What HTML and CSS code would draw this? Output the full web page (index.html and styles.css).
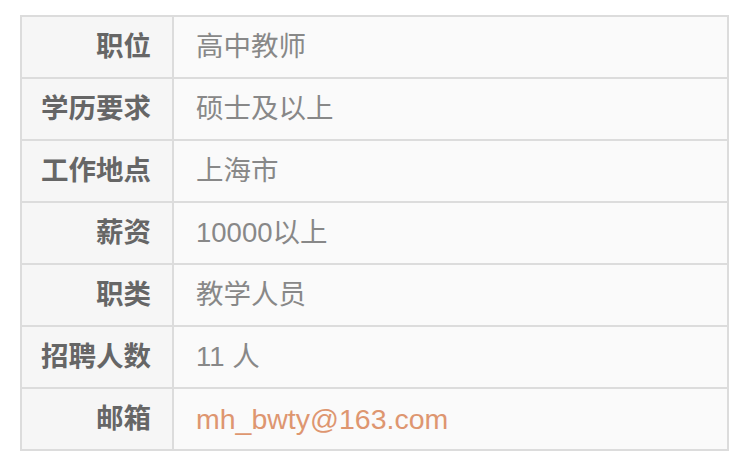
FILE: index.html
```html
<!DOCTYPE html>
<html lang="zh-CN">
<head>
<meta charset="utf-8">
<link rel="stylesheet" href="styles.css">
</head>
<body>
<table class="info">
  <tbody>
    <tr><th>职位</th><td>高中教师</td></tr>
    <tr><th>学历要求</th><td>硕士及以上</td></tr>
    <tr><th>工作地点</th><td>上海市</td></tr>
    <tr><th>薪资</th><td>10000以上</td></tr>
    <tr><th>职类</th><td>教学人员</td></tr>
    <tr><th>招聘人数</th><td>11 人</td></tr>
    <tr><th>邮箱</th><td><a class="mail" href="#">mh_bwty@163.com</a></td></tr>
  </tbody>
</table>
</body>
</html>
```

FILE: styles.css
```css
html, body {
  margin: 0;
  padding: 0;
  background: #ffffff;
}
body {
  padding: 15px 0 0 20px;
  font-family: "Liberation Sans", "Noto Sans CJK SC", sans-serif;
}
.info {
  border-collapse: collapse;
  width: 709px;
  border: 2px solid #dcdcdc;
}
.info th,
.info td {
  border: 2px solid #dcdcdc;
  height: 62px;
  padding: 0;
  font-size: 27.5px;
  line-height: 1;
  box-sizing: border-box;
}
.info th {
  width: 152px;
  text-align: right;
  padding-right: 21px;
  background: #f6f6f6;
  color: #666666;
  font-weight: bold;
}
.info td {
  text-align: left;
  padding-left: 22px;
  background: #fafafa;
  color: #888888;
  font-weight: normal;
}
.mail {
  color: #de9670;
  text-decoration: none;
  font-size: 28.5px;
}
.num {
  font-size: 28.5px;
}
```
